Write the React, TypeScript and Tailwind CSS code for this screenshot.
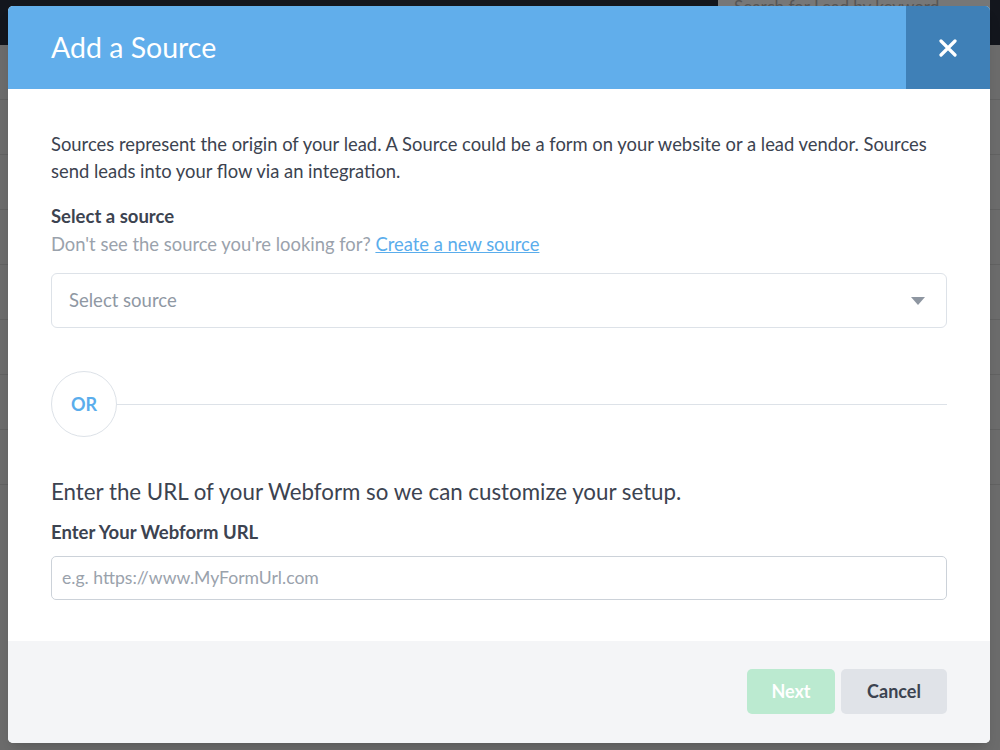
export default function App() {
	return (
		<div
			className="relative h-[750px] w-[1000px] overflow-hidden bg-[#6c6c6c]"
			style={{ fontFamily: "Lato, 'Open Sans', sans-serif" }}
		>
			{/* Dimmed page behind the modal */}
			<div className="flex h-[45px] items-start justify-end bg-[#13161d] pr-[10px]">
				<div className="h-[35px] w-[272px] overflow-hidden rounded-b bg-[#777777] px-4 text-[17px] leading-[14px] text-[#555]">
					Search for Lead by keyword
				</div>
			</div>
			<div className="flex flex-col">
				{[...Array(8)].map((_, i) => (
					<div key={i} className="h-[55px] border-b border-[#626262]"></div>
				))}
			</div>

			{/* Modal */}
			<div className="absolute top-[6px] left-[8px] flex h-[737px] w-[982px] flex-col overflow-hidden rounded-[5px] bg-white shadow-lg">
				<div className="flex h-[83px] shrink-0 bg-[#61aeeb]">
					<div className="flex flex-1 items-center pl-[43px] text-[28.5px] text-white">
						Add a Source
					</div>
					<button className="flex w-[84px] items-center justify-center bg-[#3f80b7]">
						<svg width="18" height="18" viewBox="0 0 18 18">
							<path
								d="M2 2 L16 16 M16 2 L2 16"
								stroke="white"
								strokeWidth="3.2"
								strokeLinecap="round"
							/>
						</svg>
					</button>
				</div>

				<div className="flex-1 px-[43px] pt-[42px] text-[#3c4350]">
					<p className="text-[18.4px] leading-[27px]">
						Sources represent the origin of your lead. A Source could be a form on your website or a lead vendor. Sources send leads into your flow via an integration.
					</p>
					<div className="mt-[20px] text-[18.5px] font-bold leading-[22px]">Select a source</div>
					<div className="mt-[6px] text-[18.4px] leading-[22px] text-[#9aa2ac]">
						Don't see the source you're looking for?{" "}
						<a className="text-[#5aadec] underline">Create a new source</a>
					</div>
					<div className="mt-[18px] flex h-[55px] items-center justify-between rounded-[6px] border border-[#dde2e8] pr-[21px] pl-[17px]">
						<span className="text-[18.5px] text-[#8f98a3]">Select source</span>
						<svg width="14" height="8" viewBox="0 0 14 8">
							<path d="M0 0 H14 L7 8 Z" fill="#8e96a1" />
						</svg>
					</div>

					<div className="mt-[43px] flex items-center">
						<div className="flex h-[66px] w-[66px] items-center justify-center rounded-full border border-[#dde2e8] text-[18px] font-bold text-[#5aadec]">
							OR
						</div>
						<div className="h-px flex-1 bg-[#dde2e8]"></div>
					</div>

					<div className="mt-[41px] text-[22.3px] leading-[28px]">
						Enter the URL of your Webform so we can customize your setup.
					</div>
					<div className="mt-[15px] text-[18.5px] font-bold leading-[22px]">Enter Your Webform URL</div>
					<div className="mt-[13px] flex h-[44px] items-center rounded-[5px] border border-[#ccd2d9] px-[10px]">
						<span className="text-[17.6px] text-[#9aa2ac]">e.g. https://www.MyFormUrl.com</span>
					</div>
				</div>

				<div className="flex h-[102px] shrink-0 items-center justify-end gap-[6px] bg-[#f4f5f7] px-[43px] pb-[2px]">
					<button className="h-[45px] w-[88px] rounded-[5px] bg-[#bbead0] text-[18px] font-bold text-white">
						Next
					</button>
					<button className="h-[45px] w-[106px] rounded-[5px] bg-[#e0e3e8] text-[18px] font-bold text-[#3c4350]">
						Cancel
					</button>
				</div>
			</div>
		</div>
	);
}
